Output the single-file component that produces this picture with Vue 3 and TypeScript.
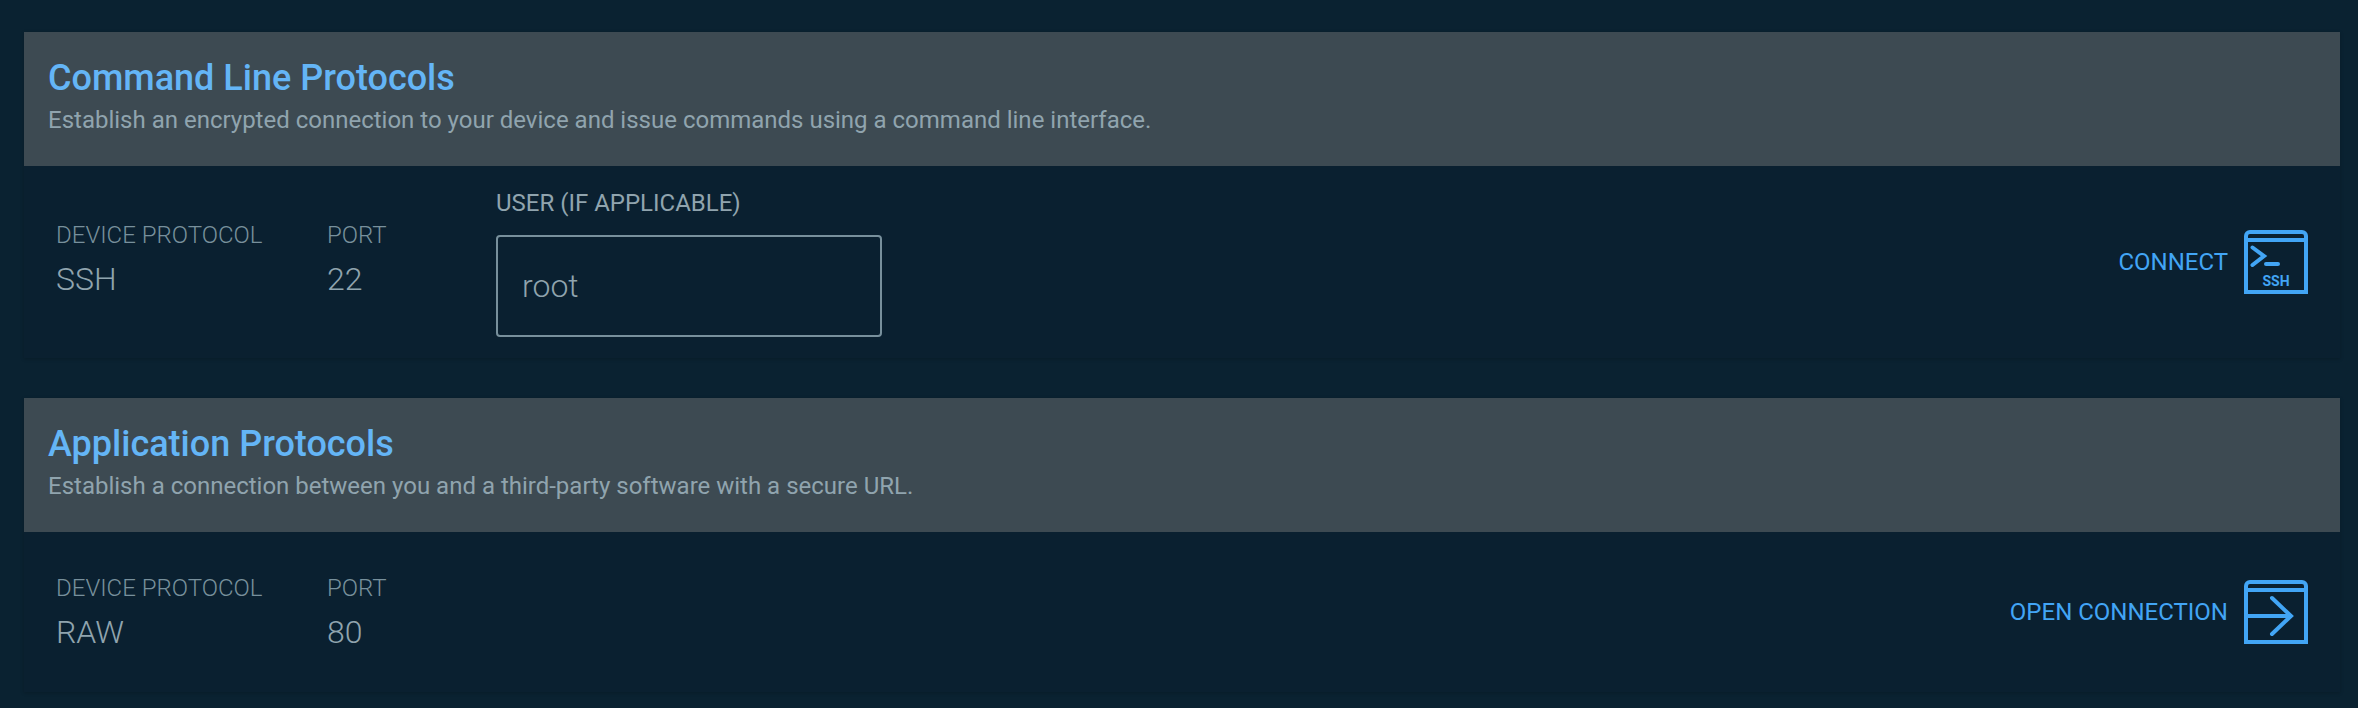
<template>
  <div class="page">
    <section class="card">
      <header class="card-header">
        <h2 class="title">Command Line Protocols</h2>
        <p class="subtitle">Establish an encrypted connection to your device and issue commands using a command line interface.</p>
      </header>
      <div class="card-body body-ssh">
        <div class="info">
          <div class="field field-protocol">
            <span class="label">DEVICE PROTOCOL</span>
            <span class="value">SSH</span>
          </div>
          <div class="field field-port">
            <span class="label">PORT</span>
            <span class="value">22</span>
          </div>
        </div>
        <div class="user">
          <label class="user-label" for="user">USER (IF APPLICABLE)</label>
          <input id="user" class="user-input" type="text" v-model="user" />
        </div>
        <a class="action" href="#" @click.prevent>
          <span>CONNECT</span>
          <svg class="action-icon" width="64" height="64" viewBox="0 0 64 64" fill="none">
            <path class="frame" d="M2 62V6a4 4 0 0 1 4-4h52a4 4 0 0 1 4 4v56zM2 10h60" />
            <path class="glyph" d="M8.5 17.5 20 26 8.5 35M22 34h12" />
            <text class="ssh" x="32" y="56" text-anchor="middle">SSH</text>
          </svg>
        </a>
      </div>
    </section>

    <section class="card">
      <header class="card-header">
        <h2 class="title">Application Protocols</h2>
        <p class="subtitle">Establish a connection between you and a third-party software with a secure URL.</p>
      </header>
      <div class="card-body body-raw">
        <div class="info">
          <div class="field field-protocol">
            <span class="label">DEVICE PROTOCOL</span>
            <span class="value">RAW</span>
          </div>
          <div class="field field-port">
            <span class="label">PORT</span>
            <span class="value">80</span>
          </div>
        </div>
        <a class="action" href="#" @click.prevent>
          <span>OPEN CONNECTION</span>
          <svg class="action-icon" width="64" height="64" viewBox="0 0 64 64" fill="none">
            <path class="frame" d="M2 62V6a4 4 0 0 1 4-4h52a4 4 0 0 1 4 4v56zM2 10h60M2 36h46" />
            <path class="glyph" d="M28 18 47 36 28 54" />
          </svg>
        </a>
      </div>
    </section>
  </div>
</template>

<script setup lang="ts">
import { ref } from 'vue'

const user = ref('root')
</script>

<style>
html,
body {
  background: #0a2231;
}
</style>

<style scoped>
.page {
  display: flex;
  flex-direction: column;
  gap: 40px;
  padding: 32px 18px 16px 24px;
  font-family: Roboto, "Liberation Sans", sans-serif;
}

.card {
  background: #0a2030;
  box-shadow: 0 1px 4px rgba(0, 0, 0, 0.2);
}

.card-header {
  box-sizing: border-box;
  height: 134px;
  padding: 24px 24px 0;
  background: #3d4a52;
}

.title {
  margin: 0;
  font-size: 36px;
  font-weight: 500;
  line-height: 44px;
  color: #64b5f6;
}

.subtitle {
  margin: 4px 0 0;
  font-size: 24px;
  font-weight: 400;
  line-height: 32px;
  color: #90a4ae;
}

.card-body {
  display: flex;
  align-items: center;
  box-sizing: border-box;
  padding: 0 32px;
}

.body-ssh {
  height: 192px;
}

.body-raw {
  height: 160px;
}

.info {
  display: flex;
}

.body-ssh .info {
  margin-top: -6px;
}

.field {
  display: flex;
  flex-direction: column;
  gap: 8px;
}

.field-protocol {
  width: 271px;
}

.field-port {
  width: 169px;
}

.label {
  font-size: 24px;
  font-weight: 300;
  line-height: 32px;
  color: #78909c;
}

.value {
  font-size: 32px;
  font-weight: 300;
  line-height: 40px;
  color: #90a4ae;
}

.user {
  display: flex;
  flex-direction: column;
  margin-top: 0;
}

.user-label {
  font-size: 24px;
  font-weight: 400;
  line-height: 32px;
  color: #90a4ae;
}

.user-input {
  box-sizing: border-box;
  width: 386px;
  height: 102px;
  margin-top: 16px;
  padding: 0 24px;
  border: 2px solid #78909c;
  border-radius: 4px;
  outline: none;
  background: transparent;
  font-family: inherit;
  font-size: 32px;
  font-weight: 300;
  color: #90a4ae;
}

.action {
  display: flex;
  align-items: center;
  gap: 16px;
  margin-left: auto;
  font-size: 24px;
  font-weight: 400;
  line-height: 32px;
  color: #42a5f5;
  text-decoration: none;
}

.action-icon {
  display: block;
  flex: none;
}

.frame,
.glyph {
  stroke: #42a5f5;
  stroke-width: 4;
}

.glyph {
  stroke-linecap: round;
  stroke-linejoin: miter;
}

.ssh {
  fill: #42a5f5;
  font-size: 14px;
  font-weight: 700;
}
</style>
